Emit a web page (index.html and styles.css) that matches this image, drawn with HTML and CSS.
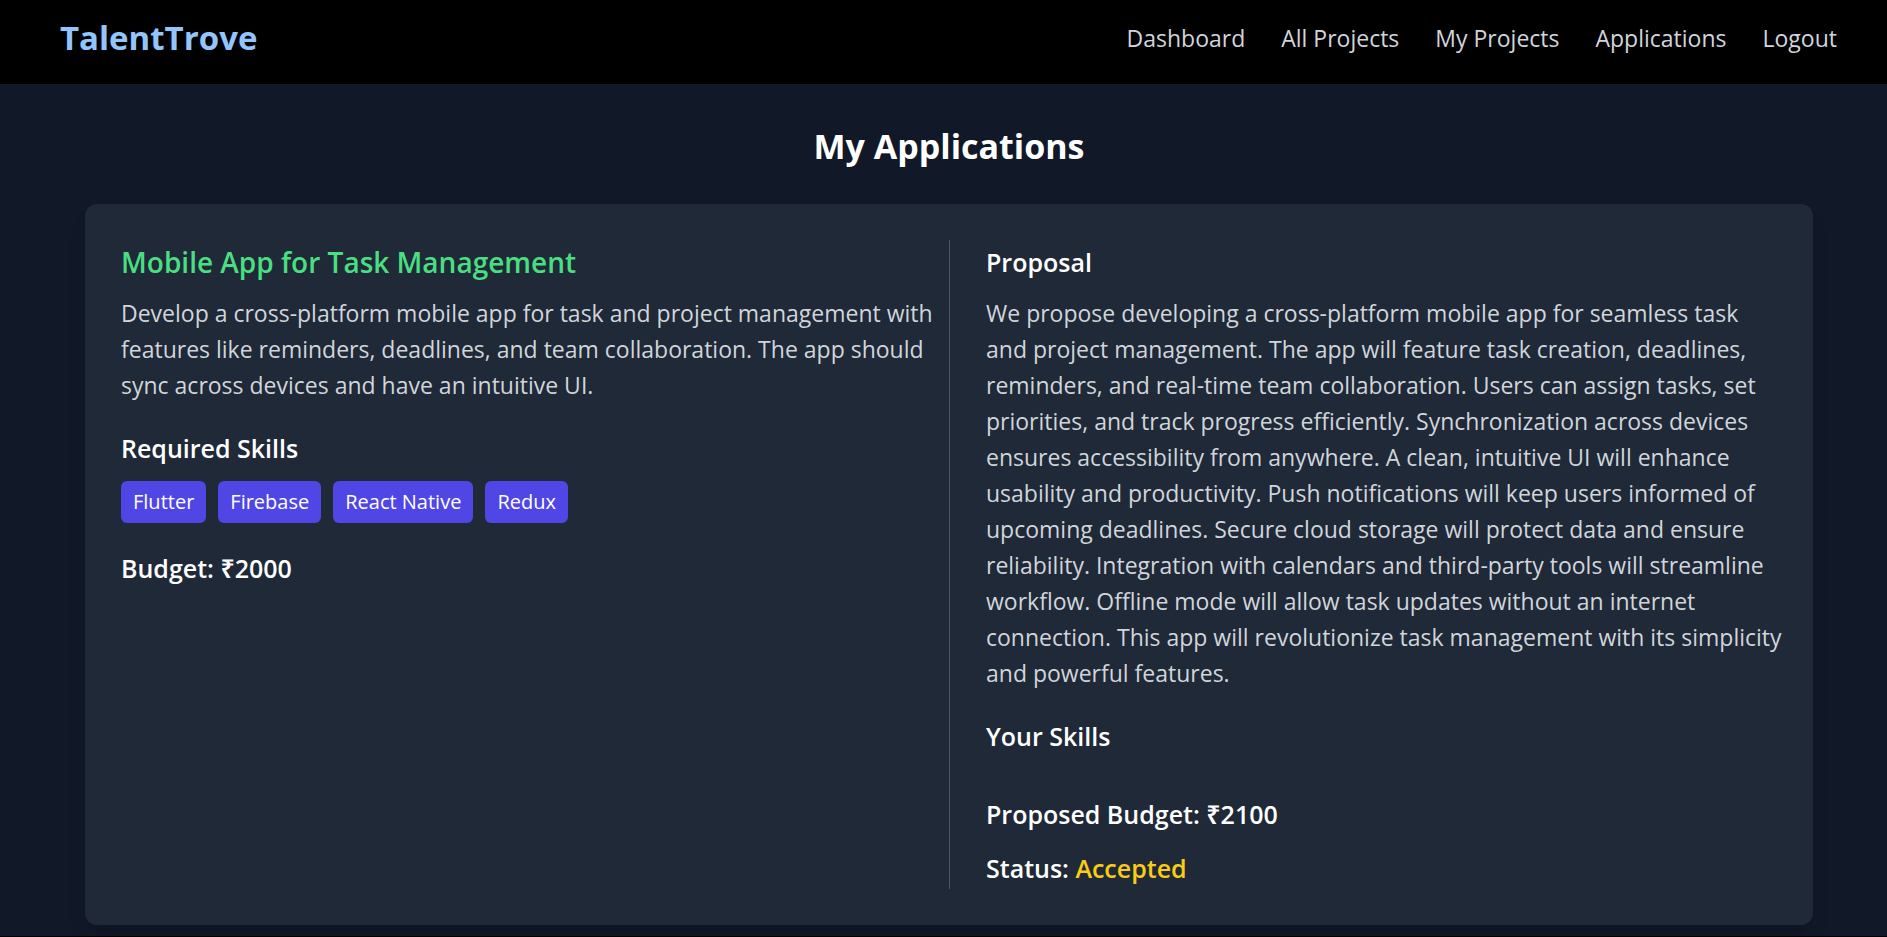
FILE: index.html
```html
<!DOCTYPE html>
<html lang="en">
<head>
<meta charset="utf-8">
<meta name="viewport" content="width=device-width, initial-scale=1">
<title>TalentTrove - My Applications</title>
<link rel="stylesheet" href="styles.css">
</head>
<body>
<header class="navbar">
  <a class="logo" href="#">TalentTrove</a>
  <nav class="links">
    <a href="#">Dashboard</a>
    <a href="#">All Projects</a>
    <a href="#">My Projects</a>
    <a href="#">Applications</a>
    <a href="#">Logout</a>
  </nav>
</header>
<main class="page">
  <h1 class="page-title">My Applications</h1>
  <article class="card">
    <section class="project">
      <h2 class="project-title">Mobile App for Task Management</h2>
      <p class="text">Develop a cross-platform mobile app for task and project management with features like reminders, deadlines, and team collaboration. The app should sync across devices and have an intuitive UI.</p>
      <h3 class="heading">Required Skills</h3>
      <ul class="tags">
        <li class="tag">Flutter</li>
        <li class="tag">Firebase</li>
        <li class="tag">React Native</li>
        <li class="tag">Redux</li>
      </ul>
      <p class="fact">Budget: ₹2000</p>
    </section>
    <section class="proposal">
      <h3 class="heading">Proposal</h3>
      <p class="text">We propose developing a cross-platform mobile app for seamless task and project management. The app will feature task creation, deadlines, reminders, and real-time team collaboration. Users can assign tasks, set priorities, and track progress efficiently. Synchronization across devices ensures accessibility from anywhere. A clean, intuitive UI will enhance usability and productivity. Push notifications will keep users informed of upcoming deadlines. Secure cloud storage will protect data and ensure reliability. Integration with calendars and third-party tools will streamline workflow. Offline mode will allow task updates without an internet connection. This app will revolutionize task management with its simplicity and powerful features.</p>
      <h3 class="heading">Your Skills</h3>
      <ul class="tags"></ul>
      <p class="fact">Proposed Budget: ₹2100</p>
      <p class="fact">Status: <span class="status">Accepted</span></p>
    </section>
  </article>
</main>
</body>
</html>
```
FILE: styles.css
```css
* {
  box-sizing: border-box;
  margin: 0;
  padding: 0;
}

body {
  background: #000;
  color: #fff;
  font-family: "Open Sans", "Noto Sans", sans-serif;
  font-size: 23px;
  line-height: 36px;
}

.navbar {
  display: flex;
  justify-content: space-between;
  align-items: center;
  padding: 14px 50px 22px 60px;
}

.logo {
  color: #93c5fd;
  font-size: 33px;
  font-weight: 700;
  line-height: 48px;
  text-decoration: none;
}

.links {
  display: flex;
  gap: 36px;
}

.links a {
  color: #d1d5db;
  text-decoration: none;
}

.page {
  background: #111827;
  padding: 38px 74px 11px 85px;
}

.page-title {
  margin-bottom: 34px;
  font-size: 34px;
  font-weight: 700;
  line-height: 48px;
  text-align: center;
}

.card {
  display: grid;
  grid-template-columns: 1fr 1fr;
  padding: 36px 28px;
  border-radius: 12px;
  background: #1f2937;
  box-shadow: 0 15px 22px -4px rgba(0, 0, 0, 0.1), 0 6px 9px -6px rgba(0, 0, 0, 0.1);
}

.project {
  padding: 1px 12px 0 8px;
}

.proposal {
  padding: 1px 0 0 36px;
  border-left: 1px solid #4b5563;
}

.project-title {
  margin-bottom: 12px;
  color: #4ade80;
  font-size: 28px;
  font-weight: 600;
  line-height: 42px;
}

.heading {
  margin-bottom: 12px;
  font-size: 25px;
  font-weight: 600;
  line-height: 42px;
}

.text {
  margin-bottom: 24px;
  color: #d1d5db;
}

.tags {
  display: flex;
  flex-wrap: wrap;
  gap: 12px;
  margin-bottom: 24px;
  list-style: none;
}

.tag {
  padding: 6px 12px;
  border-radius: 6px;
  background: #4f46e5;
  font-size: 20px;
  line-height: 30px;
}

.fact {
  font-size: 25px;
  font-weight: 600;
  line-height: 42px;
}

.fact + .fact {
  margin-top: 12px;
}

.status {
  color: #facc15;
}
```
